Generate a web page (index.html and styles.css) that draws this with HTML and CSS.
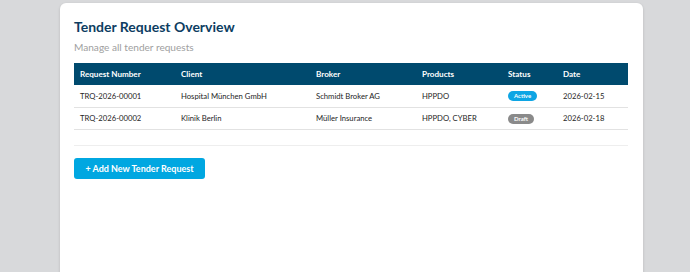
FILE: index.html
```html
<!DOCTYPE html>
<html lang="en">
<head>
    <meta charset="UTF-8">
    <meta name="viewport" content="width=device-width, initial-scale=1.0">
    <title>Tender Request Overview</title>
    <link rel="stylesheet" href="styles.css">
</head>
<body>

    <div class="card">
        <h1>Tender Request Overview</h1>
        <p class="subtitle">Manage all tender requests</p>

        <!-- Tender table -->
        <table class="tender-table">
            <thead>
                <tr>
                    <th class="col-number">Request Number</th>
                    <th class="col-client">Client</th>
                    <th class="col-broker">Broker</th>
                    <th class="col-products">Products</th>
                    <th class="col-status">Status</th>
                    <th>Date</th>
                </tr>
            </thead>
            <tbody>
                <tr>
                    <td>TRQ-2026-00001</td>
                    <td>Hospital München GmbH</td>
                    <td>Schmidt Broker AG</td>
                    <td>HPPDO</td>
                    <td><span class="badge badge-active">Active</span></td>
                    <td>2026-02-15</td>
                </tr>
                <tr>
                    <td>TRQ-2026-00002</td>
                    <td>Klinik Berlin</td>
                    <td>Müller Insurance</td>
                    <td>HPPDO, CYBER</td>
                    <td><span class="badge badge-draft">Draft</span></td>
                    <td>2026-02-18</td>
                </tr>
            </tbody>
        </table>

        <div class="actions">
            <button class="add-btn">+ Add New Tender Request</button>
        </div>
    </div>

</body>
</html>
```

FILE: styles.css
```css
* {
    box-sizing: border-box;
}
body {
    font-family: Lato, "Open Sans", sans-serif;
    margin: 0;
    background-color: #d8d9db;
    height: 272px;
    overflow: hidden;
}
.card {
    width: 583px;
    height: 290px;
    margin: 3px 0 0 60px;
    padding: 15px 15px 0 14px;
    background-color: white;
    border-radius: 6px;
    box-shadow: 0 1px 3px rgba(0, 0, 0, 0.15);
}
h1 {
    margin: 0;
    font-size: 14px;
    line-height: 18px;
    font-weight: bold;
    color: #0d3d62;
}
.subtitle {
    margin: 4px 0 9px;
    font-size: 10.1px;
    line-height: 14px;
    color: #a0a0a0;
}
.tender-table {
    width: 100%;
    table-layout: fixed;
    border-collapse: collapse;
    font-size: 7.7px;
    color: #1e1e1e;
}
.tender-table th {
    background-color: #004a6e;
    color: white;
    font-size: 8.1px;
    font-weight: bold;
    text-align: left;
    height: 22px;
    padding: 0 6px;
}
.tender-table td {
    height: 22px;
    padding: 0 6px;
    border-bottom: 1px solid #e2e2e2;
}
.col-number { width: 101px; }
.col-client { width: 135px; }
.col-broker { width: 106px; }
.col-products { width: 86px; }
.col-status { width: 55px; }
.badge {
    display: inline-block;
    padding: 0 6px;
    border-radius: 6px;
    font-size: 6px;
    font-weight: bold;
    line-height: 10px;
    color: white;
}
.badge-active {
    background-color: #0ea5e4;
}
.badge-draft {
    background-color: #8a8a8a;
}
.actions {
    margin-top: 15px;
    padding-top: 10px;
    border-top: 1px solid #eeeeee;
}
.add-btn {
    background-color: #00a7e1;
    color: white;
    border: none;
    height: 21px;
    width: 131px;
    padding: 0;
    font-family: inherit;
    font-size: 9px;
    font-weight: bold;
    cursor: pointer;
    border-radius: 3px;
}
```
